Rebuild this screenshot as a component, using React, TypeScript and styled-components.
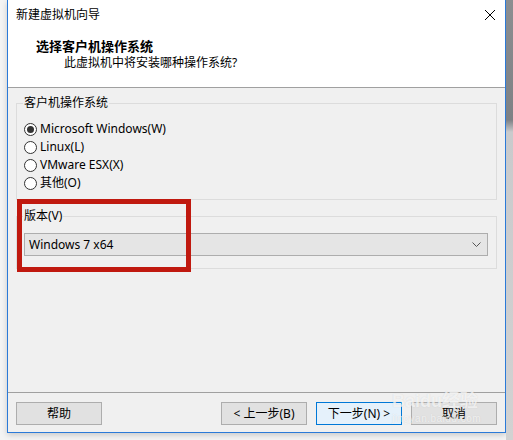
import styled, { createGlobalStyle } from "styled-components";

const Global = createGlobalStyle`
  html, body {
    margin: 0;
    padding: 0;
    background: #f4f4f4;
  }
  body {
    font-family: "Noto Sans", "Noto Sans CJK SC", sans-serif;
    font-size: 12px;
    color: #000;
  }
`;

const Page = styled.div`
  position: relative;
  display: flex;
  width: 513px;
  height: 440px;
  overflow: hidden;
  background: #f4f4f4;
`;

const Gutter = styled.div`
  width: 7px;
  flex: none;
`;

const Backdrop = styled.div`
  width: 7px;
  flex: none;
  height: 100%;
  background: linear-gradient(
    to bottom,
    #8c8e91 0px,
    #7e8185 120px,
    #c9cacc 132px,
    #d2d2d2 100%
  );
`;

const Window = styled.div`
  width: 499px;
  height: 433px;
  flex: none;
  box-sizing: border-box;
  border: 1px solid #2b7ad8;
  border-top: none;
  background: #f0f0f0;
  display: flex;
  flex-direction: column;
  box-shadow: 0 2px 6px rgba(0, 0, 0, 0.18);
`;

const Header = styled.div`
  height: 88px;
  flex: none;
  box-sizing: border-box;
  background: #fff;
  border-bottom: 1px solid #a0a0a0;
`;

const TitleRow = styled.div`
  height: 30px;
  display: flex;
  align-items: center;
  justify-content: space-between;
  padding: 0 9px 0 8px;
  line-height: 16px;
`;

const Heading = styled.div`
  margin: 8px 0 0 28px;
  font-size: 13px;
  font-weight: bold;
  line-height: 16px;
`;

const SubHeading = styled.div`
  margin: 1px 0 0 56px;
  line-height: 16px;
`;

const Body = styled.div`
  flex: 1;
  display: flex;
  flex-direction: column;
  padding: 15px 8px 0 8px;
`;

const Group = styled.div<{ h: number; mt?: number }>`
  position: relative;
  box-sizing: border-box;
  height: ${(p) => p.h}px;
  margin-top: ${(p) => p.mt ?? 0}px;
  border: 1px solid #dcdcdc;
`;

const Legend = styled.span`
  position: absolute;
  top: -9px;
  left: 6px;
  padding: 0 1px;
  background: #f0f0f0;
  line-height: 16px;
`;

const RadioList = styled.div`
  display: flex;
  flex-direction: column;
  padding: 16px 0 0 7px;
`;

const RadioRow = styled.label`
  display: flex;
  align-items: center;
  height: 18px;
  gap: 3px;
  line-height: 16px;
`;

const RadioDot = styled.span<{ checked?: boolean }>`
  width: 13px;
  height: 13px;
  box-sizing: border-box;
  border-radius: 50%;
  border: 1px solid #333;
  background: #fff;
  display: flex;
  align-items: center;
  justify-content: center;
  &::after {
    content: "";
    width: 7px;
    height: 7px;
    border-radius: 50%;
    background: ${(p) => (p.checked ? "#333" : "transparent")};
  }
`;

const ComboWrap = styled.div`
  padding: 16px 8px 0 7px;
`;

const Combo = styled.div`
  height: 23px;
  box-sizing: border-box;
  border: 1px solid #adadad;
  background: #e5e5e5;
  display: flex;
  align-items: center;
  justify-content: space-between;
  padding: 0 6px 0 4px;
  line-height: 16px;
`;

const Spacer = styled.div`
  flex: 1;
`;

const Footer = styled.div`
  margin: 0 -8px;
  border-top: 1px solid #a0a0a0;
  padding: 9px 8px 7px 8px;
  display: flex;
  gap: 9px;
`;

const Button = styled.div<{ primary?: boolean }>`
  width: 86px;
  height: 23px;
  box-sizing: border-box;
  border: 1px solid ${(p) => (p.primary ? "#0078d7" : "#adadad")};
  background: ${(p) => (p.primary ? "#e5f1fb" : "#e1e1e1")};
  display: flex;
  align-items: center;
  justify-content: center;
  line-height: 16px;
  &:first-child {
    margin-right: auto;
  }
`;

const Highlight = styled.div`
  position: absolute;
  left: 17px;
  top: 199px;
  width: 174px;
  height: 73px;
  box-sizing: border-box;
  border: 5px solid #c0190f;
  pointer-events: none;
`;

const Watermark = styled.div`
  position: absolute;
  left: 392px;
  top: 392px;
  white-space: nowrap;
  color: rgba(255, 255, 255, 0.7);
  text-shadow: 0 0 1px rgba(140, 140, 140, 0.3);
  font-family: "Liberation Sans", "Noto Sans CJK SC", sans-serif;
  pointer-events: none;
  line-height: 1;
`;

const MarkLogo = styled.div`
  font-size: 18px;
  font-weight: bold;
`;

const MarkUrl = styled.div`
  font-size: 10px;
  margin-top: 4px;
  letter-spacing: 0.5px;
`;

const radios = [
  { label: "Microsoft Windows(W)", checked: true },
  { label: "Linux(L)" },
  { label: "VMware ESX(X)" },
  { label: "其他(O)" },
];

function CloseIcon() {
  return (
    <svg width="12" height="12" viewBox="0 0 12 12">
      <path d="M1 1L11 11M11 1L1 11" stroke="#000" strokeWidth="1" />
    </svg>
  );
}

function Chevron() {
  return (
    <svg width="9" height="6" viewBox="0 0 9 6">
      <path d="M0.5 0.5L4.5 4.5L8.5 0.5" stroke="#555" strokeWidth="1" fill="none" />
    </svg>
  );
}

export default function App() {
  return (
    <Page>
      <Global />
      <Gutter />
      <Window>
        <Header>
          <TitleRow>
            <span>新建虚拟机向导</span>
            <CloseIcon />
          </TitleRow>
          <Heading>选择客户机操作系统</Heading>
          <SubHeading>此虚拟机中将安装哪种操作系统?</SubHeading>
        </Header>
        <Body>
          <Group h={97}>
            <Legend>客户机操作系统</Legend>
            <RadioList>
              {radios.map((r) => (
                <RadioRow key={r.label}>
                  <RadioDot checked={r.checked} />
                  {r.label}
                </RadioRow>
              ))}
            </RadioList>
          </Group>
          <Group h={53} mt={16}>
            <Legend>版本(V)</Legend>
            <ComboWrap>
              <Combo>
                <span>Windows 7 x64</span>
                <Chevron />
              </Combo>
            </ComboWrap>
          </Group>
          <Spacer />
          <Footer>
            <Button>帮助</Button>
            <Button>&lt; 上一步(B)</Button>
            <Button primary>下一步(N) &gt;</Button>
            <Button>取消</Button>
          </Footer>
        </Body>
      </Window>
      <Backdrop />
      <Highlight />
      <Watermark>
        <MarkLogo>Baidu经验</MarkLogo>
        <MarkUrl>jingyan.baidu.com</MarkUrl>
      </Watermark>
    </Page>
  );
}
